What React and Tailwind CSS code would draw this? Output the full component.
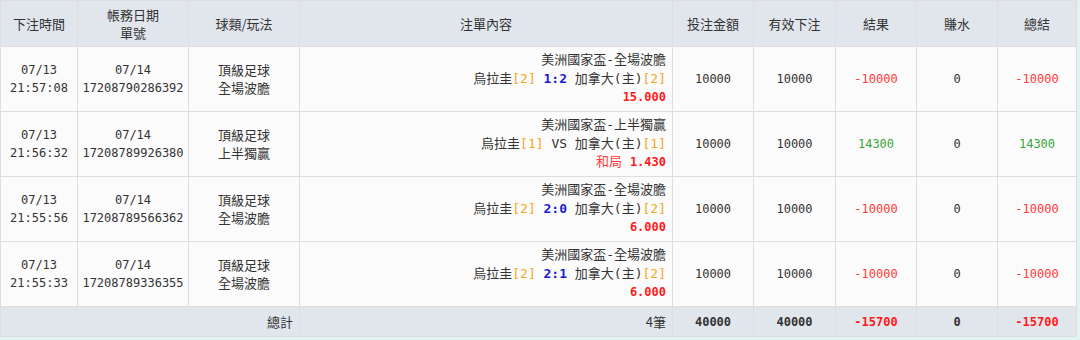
import React from 'react';

const bets = [
    { time: ['07/13', '21:57:08'], date: '07/14', no: '17208790286392', game: ['頂級足球', '全場波膽'], league: '美洲國家盃-全場波膽', home: '烏拉圭', homeRank: 2, pick: '1:2', pickType: 'score', away: '加拿大(主)', awayRank: 2, odds: '15.000', amount: 10000, valid: 10000, result: -10000, water: 0, total: -10000 },
    { time: ['07/13', '21:56:32'], date: '07/14', no: '17208789926380', game: ['頂級足球', '上半獨贏'], league: '美洲國家盃-上半獨贏', home: '烏拉圭', homeRank: 1, pick: 'VS', pickType: 'vs', away: '加拿大(主)', awayRank: 1, oddsLabel: '和局', odds: '1.430', amount: 10000, valid: 10000, result: 14300, water: 0, total: 14300 },
    { time: ['07/13', '21:55:56'], date: '07/14', no: '17208789566362', game: ['頂級足球', '全場波膽'], league: '美洲國家盃-全場波膽', home: '烏拉圭', homeRank: 2, pick: '2:0', pickType: 'score', away: '加拿大(主)', awayRank: 2, odds: '6.000', amount: 10000, valid: 10000, result: -10000, water: 0, total: -10000 },
    { time: ['07/13', '21:55:33'], date: '07/14', no: '17208789336355', game: ['頂級足球', '全場波膽'], league: '美洲國家盃-全場波膽', home: '烏拉圭', homeRank: 2, pick: '2:1', pickType: 'score', away: '加拿大(主)', awayRank: 2, odds: '6.000', amount: 10000, valid: 10000, result: -10000, water: 0, total: -10000 },
];

const mono = "font-['DejaVu_Sans_Mono','Noto_Sans_CJK_TC',monospace] text-[12px]";

// 金額顏色: 負數紅色, 正數綠色
const moneyClass = (v) => (v < 0 ? 'text-[#ff3b3b]' : v > 0 ? 'text-[#3aa63a]' : 'text-[#333]');

function Rank({ n }) {
    return <span className="text-[#f5a623]">[{n}]</span>;
}

function App() {
    const sum = (k) => bets.reduce((a, b) => a + b[k], 0);
    const td = 'border border-[#dedede] text-center align-middle';

    return (
        <div className="w-[1080px] h-[340px] bg-[#e0f4f2] font-['Noto_Sans_CJK_TC','Noto_Sans',sans-serif] text-[13px] text-[#333] leading-[18px]">
            <table className="table-fixed border-collapse w-[1076px]">
                <colgroup>
                    <col className="w-[77px]" />
                    <col className="w-[111px]" />
                    <col className="w-[111px]" />
                    <col className="w-[373px]" />
                    <col className="w-[81px]" />
                    <col className="w-[82px]" />
                    <col className="w-[81px]" />
                    <col className="w-[81px]" />
                    <col className="w-[79px]" />
                </colgroup>
                <thead className="bg-[#e1e6ec]">
                    <tr className="h-[46px]">
                        <th className={`${td} font-normal`}>下注時間</th>
                        <th className={`${td} font-normal`}>帳務日期<br />單號</th>
                        <th className={`${td} font-normal`}>球類/玩法</th>
                        <th className={`${td} font-normal`}>注單內容</th>
                        <th className={`${td} font-normal`}>投注金額</th>
                        <th className={`${td} font-normal`}>有效下注</th>
                        <th className={`${td} font-normal`}>結果</th>
                        <th className={`${td} font-normal`}>賺水</th>
                        <th className={`${td} font-normal`}>總結</th>
                    </tr>
                </thead>
                <tbody className="bg-[#fbfbfb]">
                    {bets.map((b) => (
                        <tr key={b.no} className="h-[65px]">
                            <td className={`${td} ${mono}`}>{b.time[0]}<br />{b.time[1]}</td>
                            <td className={`${td} ${mono}`}>{b.date}<br />{b.no}</td>
                            <td className={td}>{b.game[0]}<br />{b.game[1]}</td>
                            <td className={`${td} ${mono} text-[13px] text-right pr-[6px] leading-[18.5px]`}>
                                <div>{b.league}</div>
                                <div>
                                    {b.home}<Rank n={b.homeRank} />
                                    {' '}
                                    {b.pickType === 'score' ? (
                                        <span className="font-bold text-[#1a1ad6]">{b.pick}</span>
                                    ) : (
                                        <span>{b.pick}</span>
                                    )}
                                    {' '}
                                    {b.away}<Rank n={b.awayRank} />
                                </div>
                                <div>
                                    {b.oddsLabel && <span className="text-[#ff3b3b]">{b.oddsLabel} </span>}
                                    <span className="font-bold text-[12px] text-[#ff1a1a]">{b.odds}</span>
                                </div>
                            </td>
                            <td className={`${td} ${mono}`}>{b.amount}</td>
                            <td className={`${td} ${mono}`}>{b.valid}</td>
                            <td className={`${td} ${mono} ${moneyClass(b.result)}`}>{b.result}</td>
                            <td className={`${td} ${mono}`}>{b.water}</td>
                            <td className={`${td} ${mono} ${moneyClass(b.total)}`}>{b.total}</td>
                        </tr>
                    ))}
                    <tr className="h-[30px] bg-[#e1e6ec]">
                        <td colSpan={3} className={`${td} text-right pr-[6px]`}>總計</td>
                        <td className={`${td} text-right pr-[6px]`}>{bets.length}筆</td>
                        <td className={`${td} ${mono} font-bold`}>{sum('amount')}</td>
                        <td className={`${td} ${mono} font-bold`}>{sum('valid')}</td>
                        <td className={`${td} ${mono} font-bold text-[#ff1a1a]`}>{sum('result')}</td>
                        <td className={`${td} ${mono} font-bold`}>{sum('water')}</td>
                        <td className={`${td} ${mono} font-bold text-[#ff1a1a]`}>{sum('total')}</td>
                    </tr>
                </tbody>
            </table>
        </div>
    );
}

export default App;
